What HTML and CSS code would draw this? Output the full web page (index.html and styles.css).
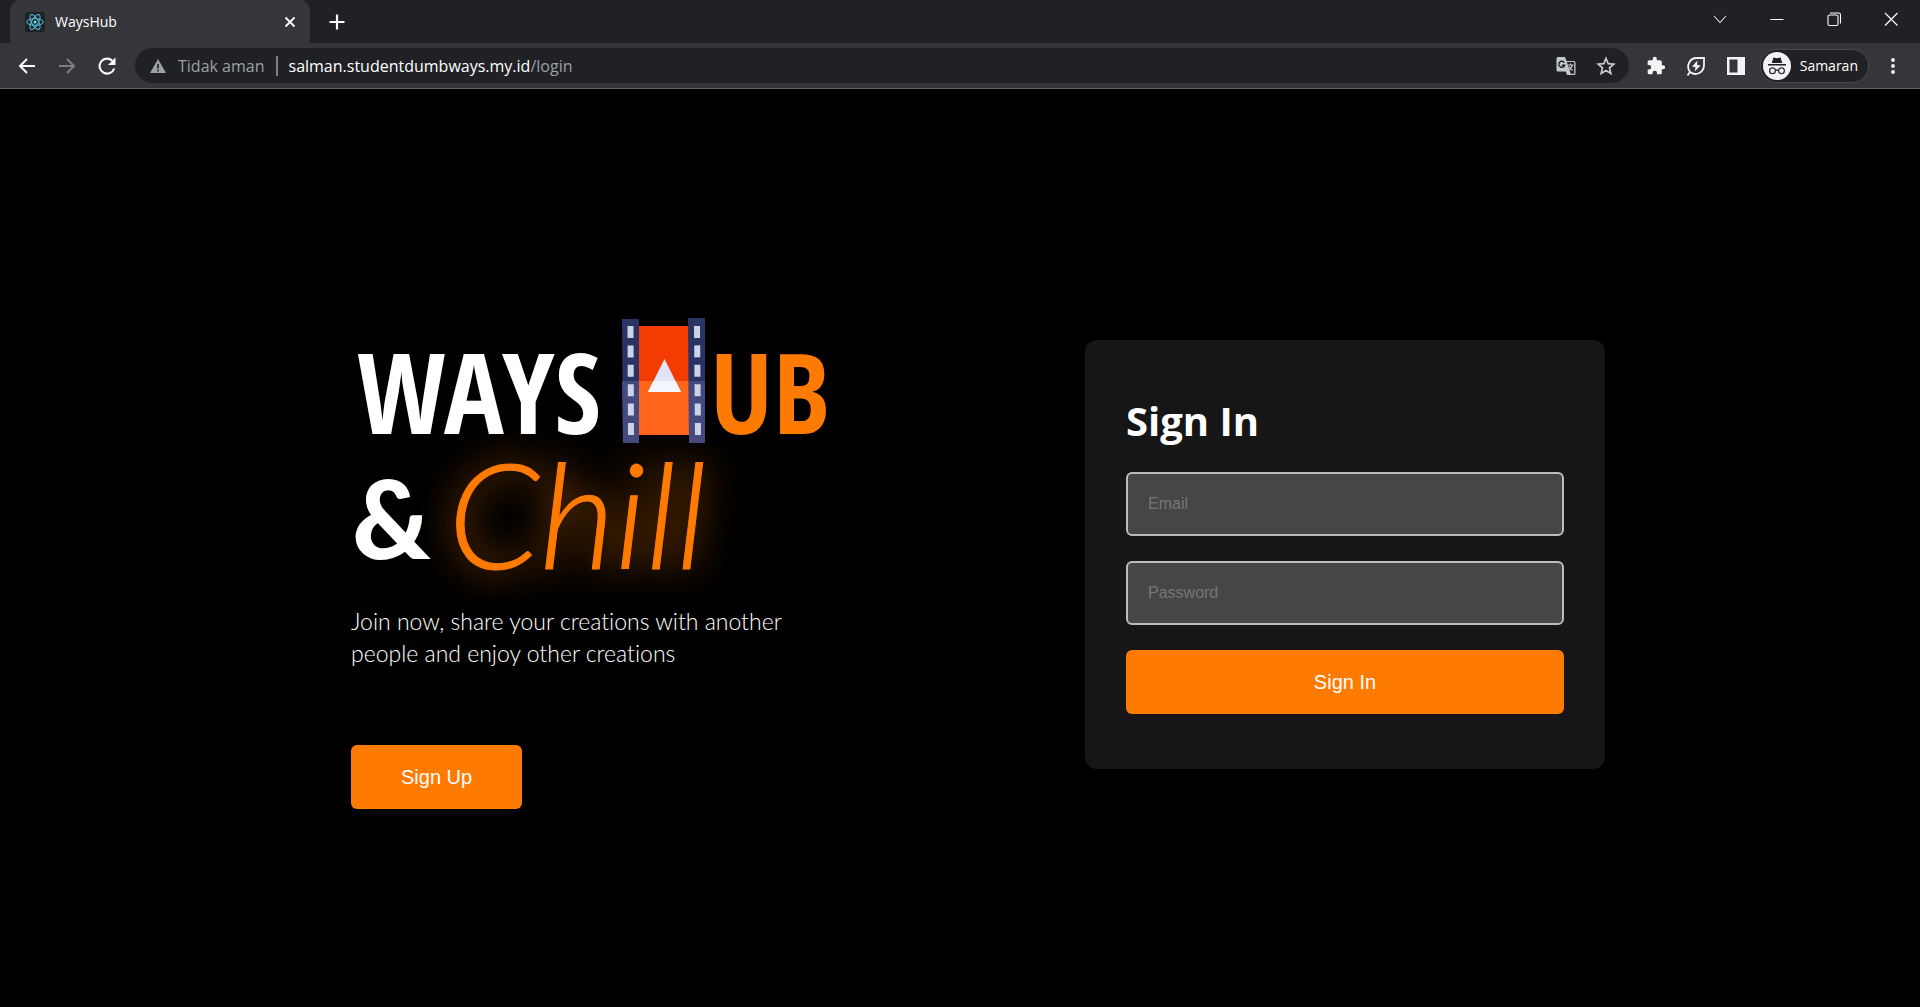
FILE: index.html
```html
<!DOCTYPE html>
<html lang="en">
<head>
<meta charset="utf-8">
<meta name="viewport" content="width=device-width, initial-scale=1">
<title>WaysHub</title>
<link rel="stylesheet" href="styles.css">
</head>
<body>
<header class="browser">
  <div class="tabstrip">
    <div class="tab">
      <svg class="favicon" viewBox="0 0 20 20" width="20" height="20" fill="none" stroke="#53c1de">
        <rect width="20" height="20" rx="2" fill="#202124" stroke="none"/>
        <circle cx="10" cy="10" r="1.6" fill="#61dafb" stroke="none"/>
        <ellipse cx="10" cy="10" rx="8.4" ry="3.3"/>
        <ellipse cx="10" cy="10" rx="8.4" ry="3.3" transform="rotate(60 10 10)"/>
        <ellipse cx="10" cy="10" rx="8.4" ry="3.3" transform="rotate(120 10 10)"/>
      </svg>
      <span class="tab-title">WaysHub</span>
      <button class="icon-btn" aria-label="Close tab"><svg viewBox="0 0 20 20" width="20" height="20" fill="none" stroke="#fff" stroke-width="1.800"><path d="M5.500 5.500l9 9M14.500 5.500l-9 9"/></svg></button>
    </div>
    <button class="icon-btn new-tab" aria-label="New tab"><svg viewBox="0 0 20 20" width="20" height="20" fill="none" stroke="#fff" stroke-width="2.2"><path d="M10 2.500v15M2.500 10h15"/></svg></button>
    <div class="window-controls">
      <button class="icon-btn" aria-label="Search tabs"><svg viewBox="0 0 20 20" width="20" height="20" fill="none" stroke="#e8eaed" stroke-width="1.1"><path d="M4 7l6 6.500L16 7"/></svg></button>
      <button class="icon-btn" aria-label="Minimize"><svg viewBox="0 0 20 20" width="20" height="20"><path d="M3.500 10h13v1h-13z" fill="#fff"/></svg></button>
      <button class="icon-btn" aria-label="Restore"><svg viewBox="0 0 20 20" width="20" height="20" fill="none" stroke="#fff" stroke-width="1.1"><rect x="4" y="6" width="10" height="10.500" rx="1.500"/><path d="M6 4h8.500a2 2 0 0 1 2 2v8.500"/></svg></button>
      <button class="icon-btn" aria-label="Close window"><svg viewBox="0 0 20 20" width="20" height="20" fill="none" stroke="#fff" stroke-width="1.200"><path d="M4 4l12.500 12.500M16.500 4L4 16.500"/></svg></button>
    </div>
  </div>
  <div class="toolbar">
    <div class="nav-buttons">
      <button class="icon-btn" aria-label="Back"><svg viewBox="0 0 20 20" width="20" height="20" fill="none" stroke="#fff" stroke-width="2"><path d="M18 10H3M10 3l-7 7 7 7"/></svg></button>
      <button class="icon-btn" aria-label="Forward"><svg viewBox="0 0 20 20" width="20" height="20" fill="none" stroke="#7d7f82" stroke-width="2"><path d="M2 10h15M10 3l7 7-7 7"/></svg></button>
      <button class="icon-btn" aria-label="Reload"><svg viewBox="0 0 20 20" width="20" height="20" fill="none" stroke="#fff" stroke-width="2.100"><path d="M17.200 12.500A7.500 7.500 0 1 1 15.300 4.700"/><path d="M18.500 1.500V9H11z" fill="#fff" stroke="none"/></svg></button>
    </div>
    <div class="omnibox">
      <svg viewBox="0 0 16 16" width="16" height="16"><path d="M8 1L16 15H0z" fill="#9aa0a6"/><path d="M7.200 6h1.600v4.500H7.200zM7.200 11.700h1.600v1.700H7.200z" fill="#202124"/></svg>
      <span class="security">Tidak aman</span>
      <span class="divider"></span>
      <span class="url">salman.studentdumbways.my.id<span class="path">/login</span></span>
      <div class="omni-actions">
        <button class="icon-btn" aria-label="Translate"><svg viewBox="0 0 20 20" width="20" height="20"><path d="M2 1h7l1.500 4H18a1.500 1.500 0 0 1 1.500 1.500v11A1.500 1.500 0 0 1 18 19h-7l-1.300-3.500H2A1.500 1.500 0 0 1 .5 14V2.500A1.500 1.500 0 0 1 2 1z" fill="#c4c7c9"/><path d="M10.800 6l4 11.800H18.200V6z" fill="#202124"/><path d="M8.300 6.600A3 3 0 1 0 8.700 9.200H6" fill="none" stroke="#202124" stroke-width="1.400"/><path d="M11.500 9h6M14.500 7.500V9M16.500 9c-.5 2.300-2 4-4 5.300M13 10.500c.8 1.700 2 2.900 3.800 4" fill="none" stroke="#c4c7c9" stroke-width="1.200"/></svg></button>
        <button class="icon-btn" aria-label="Bookmark"><svg viewBox="0 0 20 20" width="20" height="20" fill="none" stroke="#c9cbcd" stroke-width="1.700"><path d="M10 2.500l2.200 5.200 5.600.5-4.300 3.700 1.300 5.500L10 14.500l-4.800 2.900 1.300-5.500L2.200 8.200l5.600-.5z"/></svg></button>
      </div>
    </div>
    <div class="extensions">
      <button class="icon-btn" aria-label="Extensions"><svg viewBox="0 0 24 24" width="20" height="20" fill="#f1f3f4"><path d="M20.500 11H19V7a2 2 0 0 0-2-2h-4V3.500a2.500 2.500 0 0 0-5 0V5H4a2 2 0 0 0-2 2v3.800h1.500a2.700 2.700 0 0 1 0 5.400H2V20a2 2 0 0 0 2 2h3.800v-1.500a2.700 2.700 0 0 1 5.400 0V22H17a2 2 0 0 0 2-2v-4h1.500a2.500 2.500 0 0 0 0-5z"/></svg></button>
      <button class="icon-btn" aria-label="Energy saver"><svg viewBox="0 0 20 20" width="20" height="20" fill="none" stroke="#f1f3f4" stroke-width="1.800"><path d="M4 16C0 10.500 3 2 11 2h7v7c0 7.500-8 11.500-14 7zM1.500 19.500L4 16"/><path d="M11.500 4.500L6 10.500l3.500.8-.8 4.200L14.500 9.500 11 8.700z" fill="#f1f3f4" stroke="none"/></svg></button>
      <button class="icon-btn" aria-label="Side panel"><svg viewBox="0 0 20 20" width="20" height="20"><path fill="#f1f3f4" fill-rule="evenodd" d="M1 1h18v18H1zM3.500 3.500v13h8v-13z"/></svg></button>
    </div>
    <button class="profile">
      <svg viewBox="0 0 28 28" width="28" height="28"><circle cx="14" cy="14" r="14" fill="#f1f3f4"/><path d="M10.500 5.500l3.500.8 3.500-.8 1.800 5.500H8.700zM5 12h18v1.500H5z" fill="#202124"/><g fill="none" stroke="#303134" stroke-width="1.300"><circle cx="9.500" cy="18.800" r="2.900"/><circle cx="18.500" cy="18.800" r="2.900"/><path d="M12.400 18.500q1.600-1 3.200 0"/></g></svg>
      Samaran
    </button>
    <button class="icon-btn" aria-label="Menu"><svg viewBox="0 0 20 20" width="20" height="20" fill="#f1f3f4"><circle cx="10" cy="4" r="1.900"/><circle cx="10" cy="10" r="1.900"/><circle cx="10" cy="16" r="1.900"/></svg></button>
  </div>
</header>

<main class="page">
  <section class="hero">
    <svg class="logo" viewBox="0 0 490 290" width="490" height="290" role="img" aria-label="WaysHub and Chill">
      <text class="logo-word" x="6" y="123">WAYS</text>
      <g>
        <path d="M287 15h52v109h-52z" fill="#f43b02"/>
        <path d="M287 70h52v54h-52z" fill="#ff651b"/>
        <path d="M271 8h17v124h-16z" fill="#293464"/>
        <path d="M337 7h17v125h-16z" fill="#293464"/>
        <path d="M271 70h17v62h-16zM338 70h16v62h-16z" fill="#434a7f"/>
        <g stroke-width="6" stroke-dasharray="12 7.400">
          <path d="M279.500 15l.5 110" stroke="#cdd3e6"/>
          <path d="M346 15l1 110" stroke="#cdd3e6"/>
        </g>
        <path d="M313.500 48L330 81h-33z" fill="#dfe5f4"/>
        <path d="M302.500 70h22L330 81h-33z" fill="#f1f6ff"/>
      </g>
      <text class="logo-word logo-hub" x="359" y="123">UB</text>
      <text class="logo-amp" x="1" y="248">&amp;</text>
      <text class="logo-chill" x="97" y="258">Chill</text>
    </svg>
    <p class="tagline">Join now, share your creations with another people and enjoy other creations</p>
    <button class="btn">Sign Up</button>
  </section>
  <form class="card">
    <h1 class="card-title">Sign In</h1>
    <input class="field" type="email" placeholder="Email" aria-label="Email">
    <input class="field" type="password" placeholder="Password" aria-label="Password">
    <button class="btn" type="button">Sign In</button>
  </form>
</main>
</body>
</html>
```
FILE: styles.css
```css
* { box-sizing: border-box; }

body {
  margin: 0;
  min-height: 100vh;
  display: flex;
  flex-direction: column;
  background: #000;
  color: #fff;
  font-family: "Noto Sans", "Open Sans", sans-serif;
}

button { font: inherit; color: inherit; border: 0; cursor: pointer; }

svg { display: block; flex: none; }

.icon-btn { padding: 0; background: none; }

/* Browser chrome */
.browser { border-bottom: 1px solid #606164; }

.tabstrip {
  display: flex;
  align-items: center;
  height: 43px;
  padding: 0 19px 0 10px;
  background: #202124;
}

.tab {
  display: flex;
  align-items: center;
  gap: 10px;
  width: 300px;
  height: 43px;
  padding: 0 10px 0 15px;
  border-radius: 10px 10px 0 0;
  background: #35363a;
}

.tab-title { flex: 1; font: 14px/20px "Open Sans", sans-serif; }

.new-tab { margin-left: 17px; }

.window-controls {
  display: flex;
  gap: 37px;
  margin-left: auto;
  padding-bottom: 6px;
}

.toolbar {
  display: flex;
  align-items: center;
  height: 45px;
  padding: 0 17px;
  background: #35363a;
}

.nav-buttons { display: flex; gap: 20px; margin-right: 18px; }

.omnibox {
  flex: 1;
  display: flex;
  align-items: center;
  height: 35px;
  padding: 0 13px 0 15px;
  border-radius: 18px;
  background: #202124;
  font: 16px/24px "Open Sans", sans-serif;
}

.security { margin-left: 12px; color: #9aa0a6; }
.divider { width: 2px; height: 20px; margin: 0 11px; background: #7d8084; }
.path { color: #9aa0a6; }
.omni-actions { display: flex; gap: 20px; margin-left: auto; }

.extensions { display: flex; align-items: center; gap: 20px; margin: 0 14px 0 17px; }

.profile {
  display: flex;
  align-items: center;
  gap: 9px;
  height: 34px;
  margin-right: 14px;
  padding: 0 10px 0 2px;
  border: 1px solid #47484c;
  border-radius: 17px;
  background: #202124;
  font: 14px/20px "Open Sans", sans-serif;
}

/* Landing page */
.page {
  flex: 1;
  display: flex;
  flex-wrap: wrap;
  align-items: center;
  justify-content: center;
  gap: 40px 214px;
  padding: 12px 0 0 36px;
}

.hero {
  width: 520px;
  padding-top: 12px;
}

.logo { max-width: 100%; overflow: visible; }

.logo-word {
  font: bold 112px "Open Sans Condensed", "Noto Sans ExtraCondensed", "Roboto Condensed", Roboto, sans-serif;
  fill: #fff;
}

.logo-hub { fill: #ff7a00; }

.logo-amp { font: 900 108px Lato, sans-serif; fill: #fff; }

.logo-chill {
  font: italic 300 146px Lato, sans-serif;
  fill: #ff7a00;
  stroke: #ff7a00;
  stroke-width: 1px;
  filter: drop-shadow(0 0 18px #ff7a00bb);
}

.tagline {
  max-width: 460px;
  margin: 4px 0 76px;
  font: 300 23px/32px Lato, sans-serif;
  font-variant-ligatures: none;
}

.btn {
  height: 64px;
  padding: 0 50px;
  border-radius: 6px;
  background: #ff7a00;
  font: 20px/24px "Liberation Sans", Arial, sans-serif;
}

.card {
  display: flex;
  flex-direction: column;
  gap: 25px;
  width: 520px;
  padding: 55px 41px;
  border-radius: 12px;
  background: #161616;
}

.card-title {
  margin: 0;
  font: bold 40px/52px "Open Sans", sans-serif;
}

.field {
  width: 100%;
  height: 64px;
  padding: 0 20px;
  border: 2px solid #bcbcbc;
  border-radius: 6px;
  background: #464646;
  color: #fff;
  font: 16px/24px "Liberation Sans", Arial, sans-serif;
}

.field::placeholder { color: #757575; }
```
